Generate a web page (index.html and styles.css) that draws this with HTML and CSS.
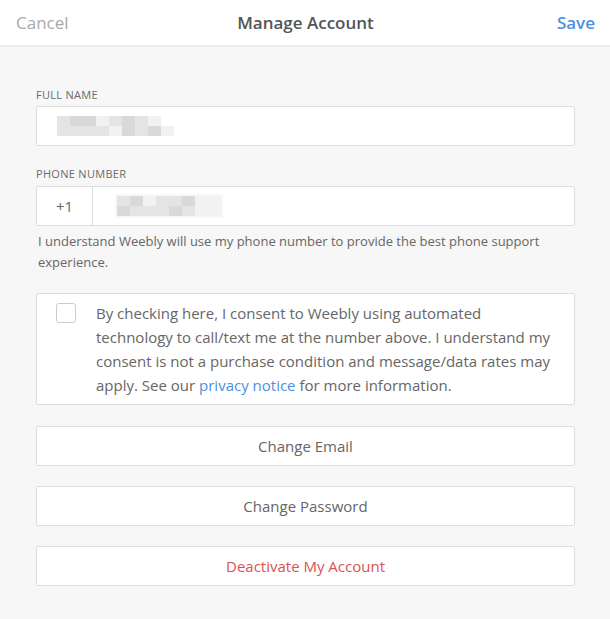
FILE: index.html
```html
<!DOCTYPE html>
<html lang="en">
<head>
    <meta charset="UTF-8">
    <meta name="viewport" content="width=device-width, initial-scale=1.0">
    <title>Manage Account</title>
    <link rel="stylesheet" href="styles.css">
</head>
<body>
    <header class="topbar">
        <a class="topbar-cancel">Cancel</a>
        <h1 class="topbar-title">Manage Account</h1>
        <a class="topbar-save">Save</a>
    </header>

    <main class="content">
        <div class="field">
            <label class="field-label">Full Name</label>
            <div class="field-box">
                <span class="blur blur-name">
                    <span class="blur-row">
                        <i class="b2"></i><i class="b3"></i><i class="b3"></i><i class="b1"></i><i class="b2"></i><i class="b3"></i><i class="b2"></i><i class="b1"></i>
                    </span>
                    <span class="blur-row">
                        <i class="b2"></i><i class="b2"></i><i class="b2"></i><i class="b2"></i><i class="b1"></i><i class="b3"></i><i class="b2"></i><i class="b3"></i><i class="b1"></i>
                    </span>
                </span>
            </div>
        </div>

        <div class="field">
            <label class="field-label">Phone Number</label>
            <div class="field-box phone-box">
                <span class="phone-prefix">+1</span>
                <span class="phone-value">
                    <span class="blur blur-phone">
                        <span class="blur-row">
                            <i class="b2"></i><i class="b3"></i><i class="b1"></i><i class="b2"></i><i class="b2"></i><i class="b3"></i><i class="b1"></i><i class="b1"></i>
                        </span>
                        <span class="blur-row">
                            <i class="b3"></i><i class="b2"></i><i class="b2"></i><i class="b2"></i><i class="b3"></i><i class="b2"></i><i class="b1"></i><i class="b1"></i>
                        </span>
                    </span>
                </span>
            </div>
            <p class="field-help">I understand Weebly will use my phone number to provide the best phone support experience.</p>
        </div>

        <div class="consent">
            <span class="consent-check"></span>
            <p class="consent-text">By checking here, I consent to Weebly using automated technology to call/text me at the number above. I understand my consent is not a purchase condition and message/data rates may apply. See our <a class="link">privacy notice</a> for more information.</p>
        </div>

        <button class="action">Change Email</button>
        <button class="action">Change Password</button>
        <button class="action danger">Deactivate My Account</button>
    </main>
</body>
</html>
```

FILE: styles.css
```css
* {
    box-sizing: border-box;
}
body {
    margin: 0;
    font-family: "Open Sans", Lato, sans-serif;
    background: #f7f7f7;
    color: #666;
}
.topbar {
    display: flex;
    align-items: center;
    justify-content: space-between;
    height: 47px;
    padding: 0 15px 0 16px;
    background: #fff;
    border-bottom: 2px solid #ececec;
}
.topbar-cancel {
    font-size: 17px;
    color: #a9a9a9;
    width: 80px;
}
.topbar-title {
    margin: 0;
    font-size: 17px;
    font-weight: 600;
    color: #555;
}
.topbar-save {
    font-size: 17px;
    font-weight: 600;
    color: #4a90e2;
    width: 80px;
    text-align: right;
}
.content {
    padding: 41px 35px 34px 36px;
}
.field + .field {
    margin-top: 21px;
}
.field-label {
    display: block;
    font-size: 11px;
    line-height: 13px;
    letter-spacing: 0.3px;
    text-transform: uppercase;
    color: #6a6a6a;
    margin-bottom: 5px;
}
.field + .field .field-label {
    margin-bottom: 6px;
}
.field-box {
    display: flex;
    align-items: center;
    height: 40px;
    background: #fff;
    border: 1px solid #ddd;
    border-radius: 2px;
    padding-left: 20px;
}
.phone-box {
    padding-left: 0;
}
.phone-prefix {
    width: 56px;
    height: 100%;
    display: flex;
    align-items: center;
    justify-content: center;
    border-right: 1px solid #ddd;
    font-size: 15px;
    color: #666;
}
.phone-value {
    padding-left: 22px;
}
.blur {
    display: flex;
    flex-direction: column;
}
.blur-row {
    display: flex;
}
.blur i {
    display: block;
    width: 13px;
    height: 10px;
}
.blur-phone {
    background: #f7f7f7;
    padding: 2px 2px;
}
.b1 { background: #f1f1f1; }
.b2 { background: #e4e4e4; }
.b3 { background: #d9d9d9; }
.field-help {
    margin: 5px 0 0 2px;
    font-size: 13px;
    line-height: 21px;
    color: #666;
}
.consent {
    display: flex;
    gap: 20px;
    margin-top: 20px;
    padding: 7px 20px 7px 19px;
    background: #fff;
    border: 1px solid #ddd;
    border-radius: 2px;
}
.consent-check {
    flex: none;
    width: 20px;
    height: 20px;
    margin-top: 2px;
    border: 1px solid #ccc;
    border-radius: 3px;
    background: #fff;
}
.consent-text {
    margin: 0;
    font-size: 15px;
    line-height: 24px;
    color: #666;
}
.link {
    color: #4a90e2;
}
.action {
    display: block;
    width: 100%;
    height: 40px;
    margin-top: 20px;
    background: #fff;
    border: 1px solid #ddd;
    border-radius: 2px;
    font-family: inherit;
    font-size: 15px;
    color: #666;
}
.consent + .action {
    margin-top: 21px;
}
.danger {
    color: #d9534f;
}
```
